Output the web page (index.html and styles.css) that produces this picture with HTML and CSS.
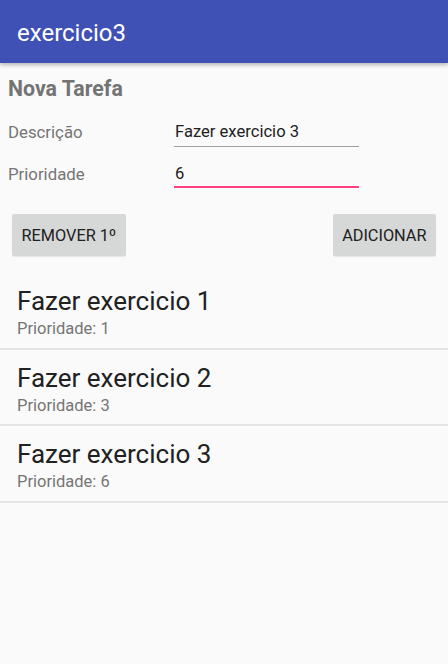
FILE: index.html
```html
<!DOCTYPE html>
<html>
<head>
<meta charset="utf-8">
<link rel="stylesheet" href="styles.css">
</head>
<body>
<header class="appbar"><span class="appbar-title">exercicio3</span></header>
<main class="content">
  <section class="form">
    <h1 class="form-title">Nova Tarefa</h1>
    <div class="field">
      <label class="field-label">Descrição</label>
      <div class="field-input">Fazer exercicio 3</div>
    </div>
    <div class="field">
      <label class="field-label">Prioridade</label>
      <div class="field-input field-input--focused">6</div>
    </div>
    <div class="actions">
      <button class="btn">REMOVER 1º</button>
      <button class="btn">ADICIONAR</button>
    </div>
  </section>
  <ul class="list">
    <li class="item"><div class="item-title">Fazer exercicio 1</div><div class="item-sub">Prioridade: 1</div></li>
    <li class="item"><div class="item-title">Fazer exercicio 2</div><div class="item-sub">Prioridade: 3</div></li>
    <li class="item"><div class="item-title">Fazer exercicio 3</div><div class="item-sub">Prioridade: 6</div></li>
  </ul>
</main>
</body>
</html>
```
FILE: styles.css
```css
* { box-sizing: border-box; }
html, body { margin: 0; padding: 0; }
body {
  width: 448px;
  height: 664px;
  background: #fafafa;
  font-family: Roboto, "Noto Sans", sans-serif;
  overflow: hidden;
}
.appbar {
  height: 63px;
  background: #3f51b5;
  display: flex;
  align-items: center;
  padding: 2px 0 0 17px;
  box-shadow: 0 2px 4px rgba(0,0,0,0.28);
  position: relative;
  z-index: 1;
}
.appbar-title {
  color: #fff;
  font-size: 24px;
  line-height: 28px;
}
.form {
  padding: 0 12px 0 8px;
}
.form-title {
  margin: 0 0 4px;
  padding-top: 14px;
  font-size: 21.3px;
  line-height: 24px;
  font-weight: bold;
  color: #737373;
}
.field {
  display: grid;
  grid-template-columns: 166px 185px;
  align-items: start;
  padding-top: 17px;
}
.field-label {
  font-size: 16.8px;
  line-height: 20px;
  color: #757575;
}
.field-input {
  font-size: 16.6px;
  line-height: 20px;
  color: #212121;
  padding: 0 1px 4px 1px;
  border-bottom: 1px solid #9e9e9e;
}
.field-input--focused {
  border-bottom: 2px solid #ff4081;
  padding-bottom: 2px;
}
.actions {
  display: flex;
  justify-content: space-between;
  padding: 26px 0 0 4px;
}
.btn {
  height: 42px;
  border: none;
  border-radius: 2px;
  background: #d6d7d7;
  font-family: Roboto, "Noto Sans", sans-serif;
  font-size: 16.3px;
  color: #212121;
  padding: 0 9.5px;
  box-shadow: 0 1px 1px rgba(0,0,0,0.08);
}
.list {
  list-style: none;
  margin: 17px 0 0;
  padding: 0;
}
.item {
  height: 76.5px;
  padding: 13px 17px 0;
  border-bottom: 2px solid #e4e4e4;
}
.item-title {
  font-size: 26px;
  line-height: 30px;
  color: #212121;
}
.item-sub {
  margin-top: 3px;
  font-size: 16.5px;
  line-height: 20px;
  color: #757575;
}
```
